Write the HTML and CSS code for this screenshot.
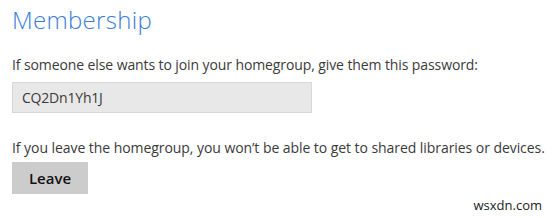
FILE: index.html
```html
<!DOCTYPE html>
<html lang="en">

<head>
    <meta charset="UTF-8">
    <meta name="viewport" content="width=device-width, initial-scale=1.0">
    <link rel="stylesheet" href="styles.css">
</head>

<body>
    <!-- Homegroup membership section -->
    <main class="membership">
        <h1>Membership</h1>

        <p class="label">If someone else wants to join your homegroup, give them this password:</p>
        <div class="password">CQ2Dn1Yh1J</div>

        <p class="label leave-label">If you leave the homegroup, you won’t be able to get to shared libraries or devices.</p>
        <button class="btn">Leave</button>
    </main>

    <footer class="watermark">wsxdn.com</footer>
</body>

</html>
```

FILE: styles.css
```css
/* Page */
body {
    font-family: 'Open Sans', 'Noto Sans', sans-serif;
    background-color: #fff;
    color: #3a3a3a;
    margin: 0;
    padding: 0;
}

.membership {
    padding: 0 12px;
}

/* Heading */
h1 {
    font-weight: 300;
    font-size: 24px;
    color: #3a7dd6;
    margin: 0;
    padding-top: 3px;
    line-height: 34px;
    letter-spacing: 0.3px;
}

/* Texts */
.label {
    font-size: 14px;
    margin: 18px 0 0;
    line-height: 20px;
    letter-spacing: -0.1px;
    white-space: nowrap;
}

.leave-label {
    margin-top: 25px;
    letter-spacing: -0.06px;
}

/* Password field */
.password {
    width: 289px;
    height: 29px;
    margin-top: 7px;
    padding-left: 9px;
    background-color: #e8e8e8;
    border: 1px solid #d8d8d8;
    font-size: 14px;
    line-height: 29px;
    letter-spacing: -0.2px;
}

/* Leave button */
.btn {
    display: block;
    width: 76px;
    height: 32px;
    margin-top: 4px;
    padding: 0;
    background-color: #cccccc;
    color: #111;
    border: none;
    font-family: inherit;
    font-size: 15px;
    font-weight: 600;
    cursor: pointer;
}

.watermark {
    position: absolute;
    right: 12px;
    bottom: 4px;
    font-size: 13px;
    color: #222;
}
```
